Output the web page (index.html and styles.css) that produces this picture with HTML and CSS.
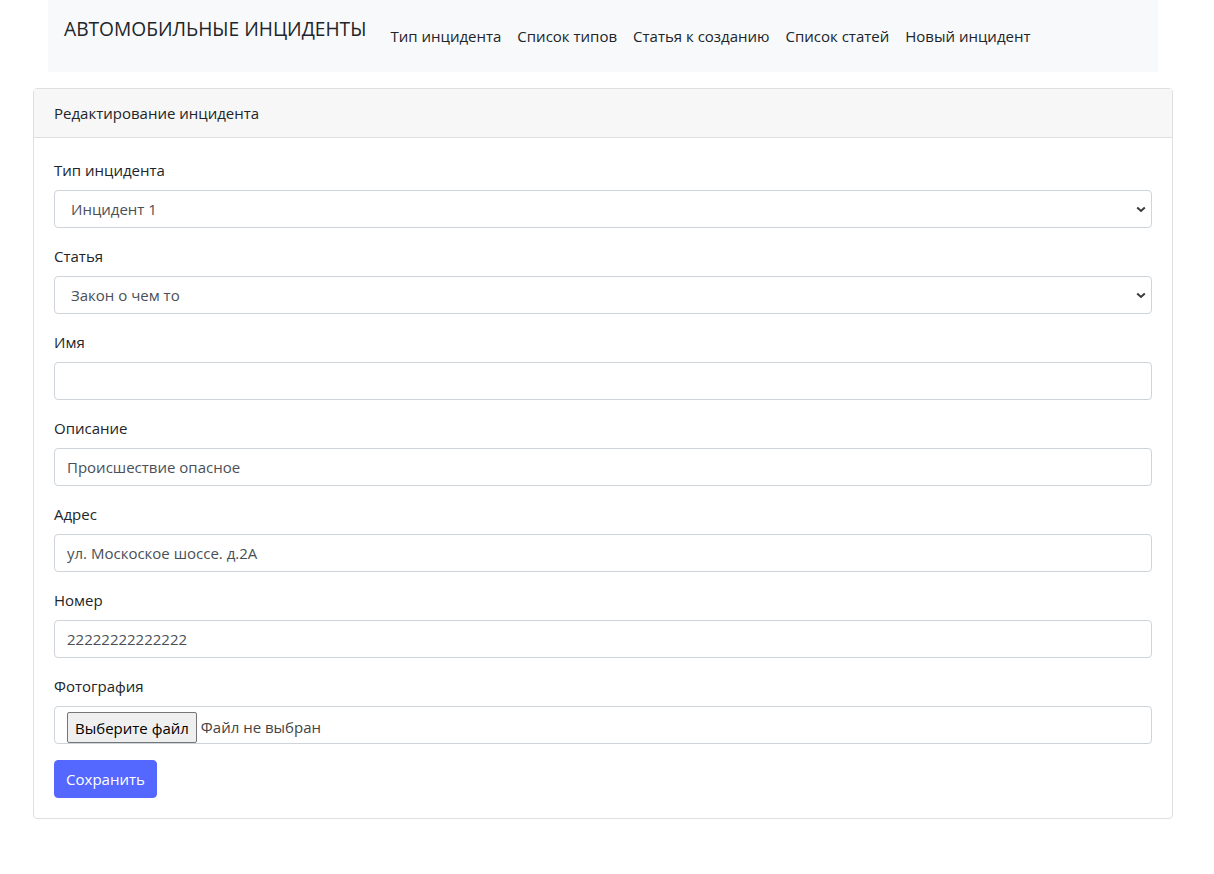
FILE: index.html
```html
<!DOCTYPE html>
<html lang="ru">
<head>
<meta charset="utf-8">
<title>Автомобильные инциденты</title>
<link rel="stylesheet" href="styles.css">
</head>
<body>
<nav class="navbar">
  <a class="brand" href="#">АВТОМОБИЛЬНЫЕ ИНЦИДЕНТЫ</a>
  <ul class="nav">
    <li><a href="#">Тип инцидента</a></li>
    <li><a href="#">Список типов</a></li>
    <li><a href="#">Статья к созданию</a></li>
    <li><a href="#">Список статей</a></li>
    <li><a href="#">Новый инцидент</a></li>
  </ul>
</nav>
<div class="card">
  <div class="card-header">Редактирование инцидента</div>
  <form class="card-body">
    <div class="group">
      <label class="label">Тип инцидента</label>
      <div class="control select"><span>Инцидент 1</span><svg class="chev" width="10" height="7" viewBox="0 0 10 7"><path d="M1.2 1.5 L5 5 L8.8 1.5" fill="none" stroke="#3b3b3b" stroke-width="2"/></svg></div>
    </div>
    <div class="group">
      <label class="label">Статья</label>
      <div class="control select"><span>Закон о чем то</span><svg class="chev" width="10" height="7" viewBox="0 0 10 7"><path d="M1.2 1.5 L5 5 L8.8 1.5" fill="none" stroke="#3b3b3b" stroke-width="2"/></svg></div>
    </div>
    <div class="group">
      <label class="label">Имя</label>
      <input class="control input" type="text" value="">
    </div>
    <div class="group">
      <label class="label">Описание</label>
      <input class="control input" type="text" value="Происшествие опасное">
    </div>
    <div class="group">
      <label class="label">Адрес</label>
      <input class="control input" type="text" value="ул. Москоское шоссе. д.2А">
    </div>
    <div class="group">
      <label class="label">Номер</label>
      <input class="control input" type="text" value="22222222222222">
    </div>
    <div class="group">
      <label class="label">Фотография</label>
      <div class="control file"><span class="file-btn">Выберите файл</span><span class="file-name">Файл не выбран</span></div>
    </div>
    <button type="button" class="btn">Сохранить</button>
  </form>
</div>
</body>
</html>
```
FILE: styles.css
```css
* { box-sizing: border-box; }
body {
  margin: 0;
  font-family: "Open Sans", "Noto Sans", sans-serif;
  font-size: 15px;
  line-height: 24px;
  color: #212529;
  background: #fff;
}
.navbar {
  margin-left: 48px;
  width: 1110px;
  height: 72px;
  background: #f8f9fa;
  display: flex;
  align-items: flex-start;
  padding: 15px 16px 0;
}
.brand {
  font-size: 19.2px;
  line-height: 28px;
  color: #212529;
  text-decoration: none;
  margin-right: 16px;
}
.nav {
  list-style: none;
  margin: 0;
  padding: 9px 0 0;
  display: flex;
}
.nav a {
  display: block;
  padding: 0 8px;
  color: #212529;
  text-decoration: none;
}
.card {
  margin: 16px 0 0 33px;
  width: 1140px;
  border: 1px solid #dfdfdf;
  border-radius: 4px;
}
.card-header {
  background: #f7f7f7;
  border-bottom: 1px solid #dfdfdf;
  padding: 12px 20px;
  height: 49px;
}
.card-body {
  padding: 20px 20px 20px;
  display: block;
}
.group { margin-bottom: 16px; }
.label {
  display: block;
  margin-bottom: 8px;
}
.control {
  display: block;
  width: 100%;
  height: 38px;
  border: 1px solid #ced4da;
  border-radius: 4px;
  padding: 6px 12px;
  font: inherit;
  color: #495057;
  background: #fff;
}
.select {
  display: flex;
  align-items: center;
  justify-content: space-between;
  padding: 6px 5px 6px 16px;
}
.chev { display: block; }
.file {
  display: flex;
  align-items: center;
  padding: 0 12px;
  color: #444;
}
.file-btn {
  display: block;
  height: 31px;
  margin-top: 5px;
  margin-right: 4px;
  padding: 2px 7px;
  border: 1px solid #767676;
  border-radius: 2px;
  background: #efefef;
  color: #000;
  line-height: 26px;
}
.file-name { margin-top: 4px; }
.btn {
  display: block;
  width: 103px;
  height: 38px;
  padding: 6px 0;
  font: inherit;
  color: #fff;
  background: #5468ff;
  border: 1px solid #5468ff;
  border-radius: 4px;
}
```
